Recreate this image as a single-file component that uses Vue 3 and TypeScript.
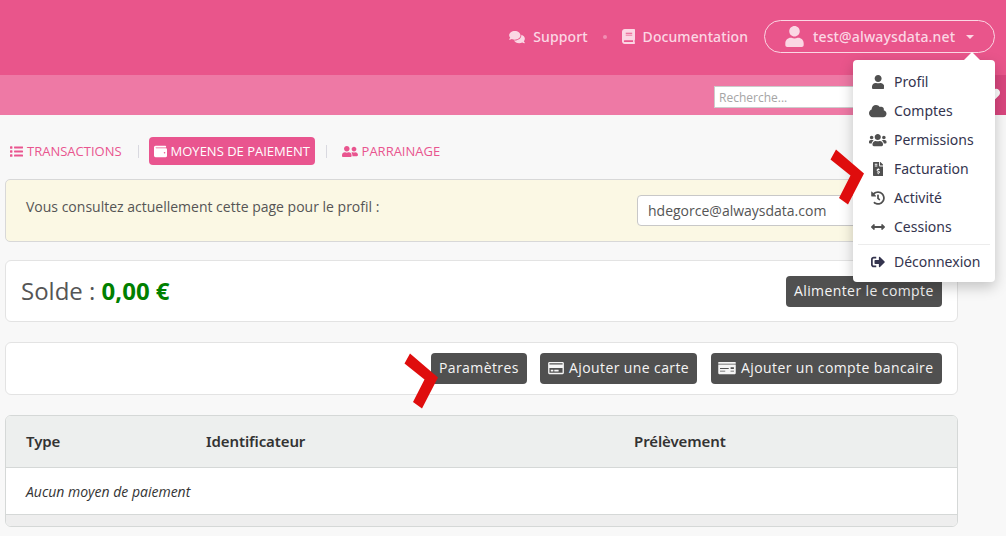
<script setup lang="ts">
interface Icon {
  box: string
  d: string
}

const icons: Record<string, Icon> = {
  user: { box: '0 0 448 512', d: 'M224 256c70.7 0 128-57.3 128-128S294.7 0 224 0 96 57.3 96 128s57.3 128 128 128zm89.6 32h-16.7c-22.2 10.2-46.9 16-72.9 16s-50.6-5.8-72.9-16h-16.7C60.2 288 0 348.2 0 422.4V464c0 26.5 21.5 48 48 48h352c26.5 0 48-21.5 48-48v-41.6c0-74.2-60.2-134.4-134.4-134.4z' },
  comments: { box: '0 0 576 512', d: 'M416 192c0-88.4-93.1-160-208-160S0 103.6 0 192c0 34.3 14.1 65.9 38 92-13.4 30.2-35.5 54.2-35.8 54.5-2.2 2.3-2.8 5.7-1.5 8.7S4.8 352 8 352c36.6 0 66.9-12.3 88.7-25 32.2 15.7 70.3 25 111.3 25 114.9 0 208-71.6 208-160zm122 220c23.9-26 38-57.7 38-92 0-66.9-53.5-124.2-129.3-148.1.9 6.6 1.3 13.3 1.3 20.1 0 105.9-107.7 192-240 192-10.8 0-21.3-.8-31.7-1.9C207.8 439.6 281.8 480 368 480c41 0 79.1-9.2 111.3-25 21.8 12.7 52.1 25 88.7 25 3.2 0 6.1-1.9 7.3-4.8 1.3-2.9.7-6.3-1.5-8.7-.3-.3-22.4-24.2-35.8-54.5z' },
  book: { box: '0 0 448 512', d: 'M448 360V24c0-13.3-10.7-24-24-24H96C43 0 0 43 0 96v320c0 53 43 96 96 96h328c13.3 0 24-10.7 24-24v-16c0-7.5-3.5-14.3-8.9-18.7-4.2-15.4-4.2-59.3 0-74.7 5.4-4.3 8.9-11.1 8.9-18.6zM128 134c0-3.3 2.7-6 6-6h212c3.3 0 6 2.7 6 6v20c0 3.3-2.7 6-6 6H134c-3.3 0-6-2.7-6-6v-20zm0 64c0-3.3 2.7-6 6-6h212c3.3 0 6 2.7 6 6v20c0 3.3-2.7 6-6 6H134c-3.3 0-6-2.7-6-6v-20zm253.4 250H96c-17.7 0-32-14.3-32-32 0-17.6 14.4-32 32-32h285.4c-1.9 17.1-1.9 46.9 0 64z' },
  cloud: { box: '0 0 640 512', d: 'M537.6 226.6c4.1-10.7 6.4-22.4 6.4-34.6 0-53-43-96-96-96-19.7 0-38.1 6-53.3 16.2C367 64.2 315.3 32 256 32c-88.4 0-160 71.6-160 160 0 2.7.1 5.4.2 8.1C40.2 219.8 0 273.2 0 336c0 79.5 64.5 144 144 144h368c70.7 0 128-57.3 128-128 0-61.9-44-113.6-102.4-125.4z' },
  users: { box: '0 0 640 512', d: 'M96 224c35.3 0 64-28.7 64-64s-28.7-64-64-64-64 28.7-64 64 28.7 64 64 64zm448 0c35.3 0 64-28.7 64-64s-28.7-64-64-64-64 28.7-64 64 28.7 64 64 64zm32 32h-64c-17.6 0-33.5 7.1-45.1 18.6 40.3 22.1 68.9 62 75.1 109.4h66c17.7 0 32-14.3 32-32v-32c0-35.3-28.7-64-64-64zm-256 0c61.9 0 112-50.1 112-112S381.9 32 320 32 208 82.1 208 144s50.1 112 112 112zm76.8 32h-8.3c-20.8 10-43.9 16-68.5 16s-47.6-6-68.5-16h-8.3C179.6 288 128 339.6 128 403.2V432c0 26.5 21.5 48 48 48h288c26.5 0 48-21.5 48-48v-28.8c0-63.6-51.6-115.2-115.2-115.2zm-223.7-13.4C161.5 263.1 145.6 256 128 256H64c-35.3 0-64 28.7-64 64v32c0 17.7 14.3 32 32 32h65.9c6.3-47.4 34.9-87.3 75.2-109.4z' },
  invoice: { box: '0 0 384 512', d: 'M377 105L279.1 7c-4.5-4.5-10.6-7-17-7H256v128h128v-6.1c0-6.3-2.5-12.4-7-16.9zm-153 31V0H24C10.7 0 0 10.7 0 24v464c0 13.3 10.7 24 24 24h336c13.3 0 24-10.7 24-24V160H248c-13.2 0-24-10.8-24-24zM64 72c0-4.42 3.58-8 8-8h80c4.42 0 8 3.58 8 8v16c0 4.42-3.58 8-8 8H72c-4.42 0-8-3.58-8-8V72zm0 80v-16c0-4.42 3.58-8 8-8h80c4.42 0 8 3.58 8 8v16c0 4.42-3.58 8-8 8H72c-4.42 0-8-3.58-8-8zm144 263.88V440c0 4.42-3.58 8-8 8h-16c-4.42 0-8-3.58-8-8v-24.29c-11.29-.58-22.27-4.52-31.37-11.35-3.9-2.93-4.1-8.77-.57-12.14l11.75-11.21c2.77-2.64 6.89-2.76 10.13-.73 3.87 2.42 8.26 3.72 12.82 3.72h28.11c6.5 0 11.8-5.92 11.8-13.19 0-5.95-3.61-11.19-8.77-12.73l-45-13.5c-18.59-5.58-31.58-23.42-31.58-43.39 0-24.52 19.05-44.44 42.67-45.07V232c0-4.42 3.58-8 8-8h16c4.42 0 8 3.58 8 8v24.29c11.29.58 22.27 4.51 31.37 11.35 3.9 2.93 4.1 8.77.57 12.14l-11.75 11.21c-2.77 2.64-6.89 2.76-10.13.73-3.87-2.43-8.26-3.72-12.82-3.72h-28.11c-6.5 0-11.8 5.92-11.8 13.19 0 5.95 3.61 11.19 8.77 12.73l45 13.5c18.59 5.58 31.58 23.42 31.58 43.39 0 24.53-19.05 44.44-42.67 45.07z' },
  history: { box: '0 0 512 512', d: 'M504 255.531c.253 136.64-111.18 248.372-247.82 248.468-59.015.042-113.223-20.53-155.822-54.911-11.077-8.94-11.905-25.541-1.839-35.607l11.267-11.267c8.609-8.609 22.353-9.551 31.891-1.984C173.062 425.135 212.781 440 256 440c101.705 0 184-82.311 184-184 0-101.705-82.311-184-184-184-48.814 0-93.149 18.969-126.068 49.932l50.754 50.754c10.08 10.08 2.941 27.314-11.313 27.314H24c-8.837 0-16-7.163-16-16V38.627c0-14.254 17.234-21.393 27.314-11.314l49.372 49.372C129.209 34.136 189.552 8 256 8c136.81 0 247.747 110.78 248 247.531zm-180.912 78.784l9.823-12.63c8.138-10.463 6.253-25.542-4.21-33.679L288 256.349V152c0-13.255-10.745-24-24-24h-16c-13.255 0-24 10.745-24 24v135.651l65.409 50.874c10.463 8.137 25.541 6.253 33.679-4.21z' },
  arrows: { box: '0 0 512 512', d: 'M377.941 169.941V216H134.059v-46.059c0-21.382-25.851-32.09-40.971-16.971L7.029 239.029c-9.373 9.373-9.373 24.568 0 33.941l86.059 86.059c15.119 15.119 40.971 4.411 40.971-16.971V296h243.882v46.059c0 21.382 25.851 32.09 40.971 16.971l86.059-86.059c9.373-9.373 9.373-24.568 0-33.941l-86.059-86.059c-15.119-15.12-40.971-4.412-40.971 16.97z' },
  logout: { box: '0 0 512 512', d: 'M497 273L329 441c-15 15-41 4.5-41-17v-96H152c-13.3 0-24-10.7-24-24v-96c0-13.3 10.7-24 24-24h136V88c0-21.4 25.9-32 41-17l168 168c9.3 9.4 9.3 24.6 0 34zM192 436v-40c0-6.6-5.4-12-12-12H96c-17.7 0-32-14.3-32-32V160c0-17.7 14.3-32 32-32h84c6.6 0 12-5.4 12-12V76c0-6.6-5.4-12-12-12H96c-53 0-96 43-96 96v192c0 53 43 96 96 96h84c6.6 0 12-5.4 12-12z' },
  wallet: { box: '0 0 512 512', d: 'M461.2 128H80c-8.84 0-16-7.16-16-16s7.16-16 16-16h384c8.84 0 16-7.16 16-16 0-26.51-21.49-48-48-48H64C28.65 32 0 60.65 0 96v320c0 35.35 28.65 64 64 64h397.2c28.02 0 50.8-21.53 50.8-48V176c0-26.47-22.78-48-50.8-48zM416 336c-17.67 0-32-14.33-32-32s14.33-32 32-32 32 14.33 32 32-14.33 32-32 32z' },
  friends: { box: '0 0 640 512', d: 'M192 256c61.9 0 112-50.1 112-112S253.9 32 192 32 80 82.1 80 144s50.1 112 112 112zm76.8 32h-8.3c-20.8 10-43.9 16-68.5 16s-47.6-6-68.5-16h-8.3C51.6 288 0 339.6 0 403.2V432c0 26.5 21.5 48 48 48h288c26.5 0 48-21.5 48-48v-28.8c0-63.6-51.6-115.2-115.2-115.2zM480 256c53 0 96-43 96-96s-43-96-96-96-96 43-96 96 43 96 96 96zm48 32h-3.8c-13.9 4.8-28.6 8-44.2 8s-30.3-3.2-44.2-8H432c-20.4 0-39.2 5.9-55.7 15.4 24.4 26.3 39.7 61.2 39.7 99.8v38.4c0 2.2-.5 4.3-.6 6.4H592c26.5 0 48-21.5 48-48 0-61.9-50.1-112-112-112z' },
  list: { box: '0 0 512 512', d: 'M16 48h64a16 16 0 0 1 16 16v64a16 16 0 0 1-16 16H16a16 16 0 0 1-16-16V64a16 16 0 0 1 16-16zm0 160h64a16 16 0 0 1 16 16v64a16 16 0 0 1-16 16H16a16 16 0 0 1-16-16v-64a16 16 0 0 1 16-16zm0 160h64a16 16 0 0 1 16 16v64a16 16 0 0 1-16 16H16a16 16 0 0 1-16-16v-64a16 16 0 0 1 16-16zM176 56h320a16 16 0 0 1 16 16v48a16 16 0 0 1-16 16H176a16 16 0 0 1-16-16V72a16 16 0 0 1 16-16zm0 160h320a16 16 0 0 1 16 16v48a16 16 0 0 1-16 16H176a16 16 0 0 1-16-16v-48a16 16 0 0 1 16-16zm0 160h320a16 16 0 0 1 16 16v48a16 16 0 0 1-16 16H176a16 16 0 0 1-16-16v-48a16 16 0 0 1 16-16z' },
  card: { box: '0 0 576 512', d: 'M527.9 32H48.1C21.5 32 0 53.5 0 80v352c0 26.5 21.5 48 48.1 48h479.8c26.6 0 48.1-21.5 48.1-48V80c0-26.5-21.5-48-48.1-48zM54.1 80h467.8c3.3 0 6 2.7 6 6v42H48.1V86c0-3.3 2.7-6 6-6zm467.8 352H54.1c-3.3 0-6-2.7-6-6V256h479.8v170c0 3.3-2.7 6-6 6zM192 332v40c0 6.6-5.4 12-12 12h-72c-6.6 0-12-5.4-12-12v-40c0-6.6 5.4-12 12-12h72c6.6 0 12 5.4 12 12zm192 0v40c0 6.6-5.4 12-12 12H236c-6.6 0-12-5.4-12-12v-40c0-6.6 5.4-12 12-12h136c6.6 0 12 5.4 12 12z' },
  check: { box: '0 0 640 512', d: 'M0 448c0 17.67 14.33 32 32 32h576c17.67 0 32-14.33 32-32V128H0v320zm448-208c0-8.84 7.16-16 16-16h96c8.84 0 16 7.16 16 16v32c0 8.84-7.16 16-16 16h-96c-8.84 0-16-7.16-16-16v-32zm0 120c0-4.42 3.58-8 8-8h112c4.42 0 8 3.58 8 8v16c0 4.42-3.58 8-8 8H456c-4.42 0-8-3.58-8-8v-16zM64 264c0-4.42 3.58-8 8-8h304c4.42 0 8 3.58 8 8v16c0 4.42-3.58 8-8 8H72c-4.42 0-8-3.58-8-8v-16zm0 96c0-4.42 3.58-8 8-8h176c4.42 0 8 3.58 8 8v16c0 4.42-3.58 8-8 8H72c-4.42 0-8-3.58-8-8v-16zM624 32H16C7.16 32 0 39.16 0 48v48h640V48c0-8.84-7.16-16-16-16z' },
  heart: { box: '0 0 512 512', d: 'M462.3 62.6C407.5 15.9 326 24.3 275.7 76.2L256 96.500l-19.700-20.300C186.100 24.300 104.500 15.900 49.700 62.600c-62.800 53.600-66.100 149.800-9.900 207.900l193.500 199.800c12.500 12.900 32.800 12.900 45.300 0l193.500-199.800c56.300-58.100 53-154.300-9.800-207.900z' },
}

const menu = [
  { icon: 'user', label: 'Profil' },
  { icon: 'cloud', label: 'Comptes' },
  { icon: 'users', label: 'Permissions' },
  { icon: 'invoice', label: 'Facturation' },
  { icon: 'history', label: 'Activité' },
  { icon: 'arrows', label: 'Cessions' },
]
</script>

<template>
  <div class="page">
    <header class="top">
      <a class="link support"><svg class="i-comments" :viewBox="icons.comments.box"><path :d="icons.comments.d" /></svg><span>Support</span></a>
      <i class="dot"></i>
      <a class="link docs"><svg class="i-book" :viewBox="icons.book.box"><path :d="icons.book.d" /></svg><span>Documentation</span></a>
      <button class="account">
        <svg class="i-user" :viewBox="icons.user.box"><path :d="icons.user.d" /></svg>
        <span>test@alwaysdata.net</span>
        <i class="caret"></i>
      </button>
    </header>

    <div class="bar">
      <div class="search">Recherche...</div>
      <div class="fav"><svg :viewBox="icons.heart.box"><path :d="icons.heart.d" /></svg></div>
    </div>

    <main>
      <nav class="tabs">
        <a class="tab t1"><svg class="w13" :viewBox="icons.list.box"><path :d="icons.list.d" /></svg><span>TRANSACTIONS</span></a>
        <i class="sep s1"></i>
        <a class="tab active"><svg class="w13" :viewBox="icons.wallet.box"><path :d="icons.wallet.d" /></svg><span>MOYENS DE PAIEMENT</span></a>
        <i class="sep s2"></i>
        <a class="tab t3"><svg class="w16" :viewBox="icons.friends.box"><path :d="icons.friends.d" /></svg><span>PARRAINAGE</span></a>
      </nav>

      <section class="notice">
        <span class="notice-text">Vous consultez actuellement cette page pour le profil :</span>
        <div class="select"><span>hdegorce@alwaysdata.com</span></div>
      </section>

      <section class="card balance">
        <div class="solde"><span class="lab">Solde :</span> <b>0,00 €</b></div>
        <button class="btn b0"><span>Alimenter le compte</span></button>
      </section>

      <section class="card actions">
        <button class="btn b1"><span>Paramètres</span></button>
        <button class="btn b2"><svg class="i-card" :viewBox="icons.card.box"><path :d="icons.card.d" /></svg><span>Ajouter une carte</span></button>
        <button class="btn b3"><svg class="i-check" :viewBox="icons.check.box"><path :d="icons.check.d" /></svg><span>Ajouter un compte bancaire</span></button>
      </section>

      <section class="table">
        <div class="thead"><span>Type</span><span>Identificateur</span><span>Prélèvement</span></div>
        <div class="empty"><em>Aucun moyen de paiement</em></div>
        <div class="tfoot"></div>
      </section>
    </main>

    <div class="menu">
      <a v-for="m in menu" :key="m.label" class="item">
        <span class="ico"><svg :viewBox="icons[m.icon].box"><path :d="icons[m.icon].d" /></svg></span><span>{{ m.label }}</span>
      </a>
      <hr />
      <a class="item out">
        <span class="ico"><svg :viewBox="icons.logout.box"><path :d="icons.logout.d" /></svg></span><span>Déconnexion</span>
      </a>
    </div>

    <svg class="mark m1" viewBox="0 0 34 56"><path d="M6 0.500L34 24.500L18 55.500L9 49L20.500 26.500L0.500 10.500Z" /></svg>
    <svg class="mark m2" viewBox="0 0 34 56"><path d="M6 0.500L34 24.500L18 55.500L9 49L20.500 26.500L0.500 10.500Z" /></svg>
  </div>
</template>

<style>
body {
  margin: 0;
  background: #f8f8f8;
}
</style>

<style scoped>
.page {
  position: relative;
  width: 1006px;
  height: 536px;
  overflow: hidden;
  background: #f8f8f8;
  font-family: "Open Sans", "Noto Sans", sans-serif;
  color: #555;
}
.page * { box-sizing: border-box; }
svg { display: block; fill: currentColor; flex: none; }
span, b, em { white-space: nowrap; }
button { font: inherit; margin: 0; }
.top {
  height: 75px;
  padding: 0 11px 2px 0;
  display: flex;
  align-items: center;
  justify-content: flex-end;
  background: #e9558b;
  color: #fbd7e4;
  font: 500 14px "Noto Sans", sans-serif;
}
.link { display: flex; align-items: center; letter-spacing: .08px; }
.i-comments { width: 16px; height: 14px; margin-right: 8px; }
.i-book { width: 13px; height: 15px; margin-right: 8px; }
.dot { width: 4px; height: 4px; border-radius: 50%; background: #f18db2; margin: 0 15px; }
.account {
  width: 231px;
  height: 33px;
  margin-left: 16px;
  padding: 0 0 0 20px;
  border: 1px solid #fbd7e4;
  border-radius: 17px;
  background: none;
  color: inherit;
  letter-spacing: .14px;
  display: flex;
  align-items: center;
}
.i-user { width: 19px; height: 21px; margin-right: 9px; }
.caret { border: 4px solid transparent; border-top-color: currentColor; border-bottom: 0; margin-left: 11px; }
.bar {
  height: 40px;
  display: flex;
  align-items: center;
  justify-content: flex-end;
  background: #ee79a5;
}
.search {
  width: 200px;
  height: 22px;
  margin: 4px 52px 0 0;
  border: 1px solid #ccc;
  background: #fff;
  color: #a5a5a5;
  padding-left: 4px;
  font-size: 12px;
  line-height: 21px;
}
.fav { width: 40px; height: 40px; background: #d9467e; color: #fff; padding: 13px 0 0 20px; }
.fav svg { width: 14px; height: 14px; }
main { width: 953px; margin-left: 5px; }
.tabs {
  height: 64px;
  padding-top: 8px;
  display: flex;
  align-items: center;
  color: #e9558f;
  font-size: 13px;
}
.tab { display: flex; align-items: center; height: 28px; gap: 4px; }
.t1 { margin-left: 5px; }
.w13 { width: 13px; height: 13px; }
.w16 { width: 16px; height: 13px; }
.active { width: 166px; padding-left: 5px; border-radius: 4px; background: #e9558f; color: #fff; }
.sep { width: 1px; height: 13px; background: #d9d9e0; }
.s1 { margin: 0 10px 0 16px; }
.s2 { margin: 0 15px 0 11px; }
.notice {
  height: 63px;
  border: 1px solid #d8d8d8;
  border-radius: 5px;
  background: #fbf8e4;
  display: flex;
  justify-content: space-between;
  padding: 15px 20px 0;
  font-size: 14px;
}
.notice-text { line-height: 24px; }
.select {
  width: 300px;
  height: 31px;
  border: 1px solid #c8c8c8;
  border-radius: 4px;
  background: #fff;
  padding-left: 10px;
  line-height: 30px;
}
.card {
  border: 1px solid #e3e3e3;
  border-radius: 6px;
  background: #fff;
  display: flex;
  align-items: center;
  padding: 0 15px;
}
.balance { height: 62px; margin-top: 18px; justify-content: space-between; }
.solde { font-size: 24px; line-height: 30px; }
.solde b { color: #008000; font-size: 24px; }
.actions { height: 53px; margin-top: 20px; justify-content: flex-end; }
.btn {
  height: 31px;
  border: 0;
  border-radius: 4px;
  padding: 0 0 1px 8px;
  background: #505050;
  color: #f5f5f5;
  font: 14px "Open Sans", sans-serif;
  letter-spacing: .4px;
  display: flex;
  align-items: center;
}
.actions .btn { padding-bottom: 3px; }
.actions .btn svg { margin-top: 1px; }
.b0 { width: 156px; }
.b1 { width: 96px; }
.b2 { width: 157px; margin: 0 14px 0 13px; }
.b3 { width: 231px; }
.i-card { width: 16px; height: 14px; margin-right: 5px; }
.actions .b3 { padding-left: 7px; }
.i-check { width: 18px; height: 14px; margin-right: 5px; }
.table {
  height: 112px;
  margin-top: 20px;
  border: 1px solid #d5d8d7;
  border-radius: 6px;
  background: #fff;
  overflow: hidden;
  color: #333;
}
.thead {
  height: 52px;
  border-bottom: 1px solid #d5d8d7;
  background: #edefee;
  display: grid;
  grid-template-columns: 180px 428px 1fr;
  align-items: center;
  padding: 0 0 2px 20px;
  font: 600 15px "Noto Sans", sans-serif;
  letter-spacing: -.1px;
}
.empty { height: 46px; display: flex; align-items: center; padding: 0 0 0 20px; font-size: 14px; }
.tfoot { height: 13px; border-top: 1px solid #d5d8d7; background: #eee; }
.menu {
  position: absolute;
  left: 853px;
  top: 60px;
  width: 142px;
  height: 222px;
  padding: 7px 5px;
  border-radius: 4px;
  background: #fff;
  box-shadow: 0 5px 14px rgba(0, 0, 0, .22);
  color: #34344e;
  font: 14px "Noto Sans", sans-serif;
}
.menu::before {
  content: "";
  position: absolute;
  right: 15px;
  top: -8px;
  border: 8px solid transparent;
  border-top: 0;
  border-bottom-color: #fff;
}
.item { height: 29px; display: flex; align-items: center; }
.ico { width: 40px; display: flex; justify-content: center; margin-right: -4px; color: #505050; }
.ico svg { height: 14px; width: auto; }
.out .ico { color: #34344e; }
hr { border: 0; height: 1px; background: #ececec; margin: 3px 0 2px; }
.mark { position: absolute; width: 34px; height: 56px; fill: #df0d0d; }
.m1 { left: 829.5px; top: 148.5px; }
.m2 { left: 403.5px; top: 352.5px; }
</style>
